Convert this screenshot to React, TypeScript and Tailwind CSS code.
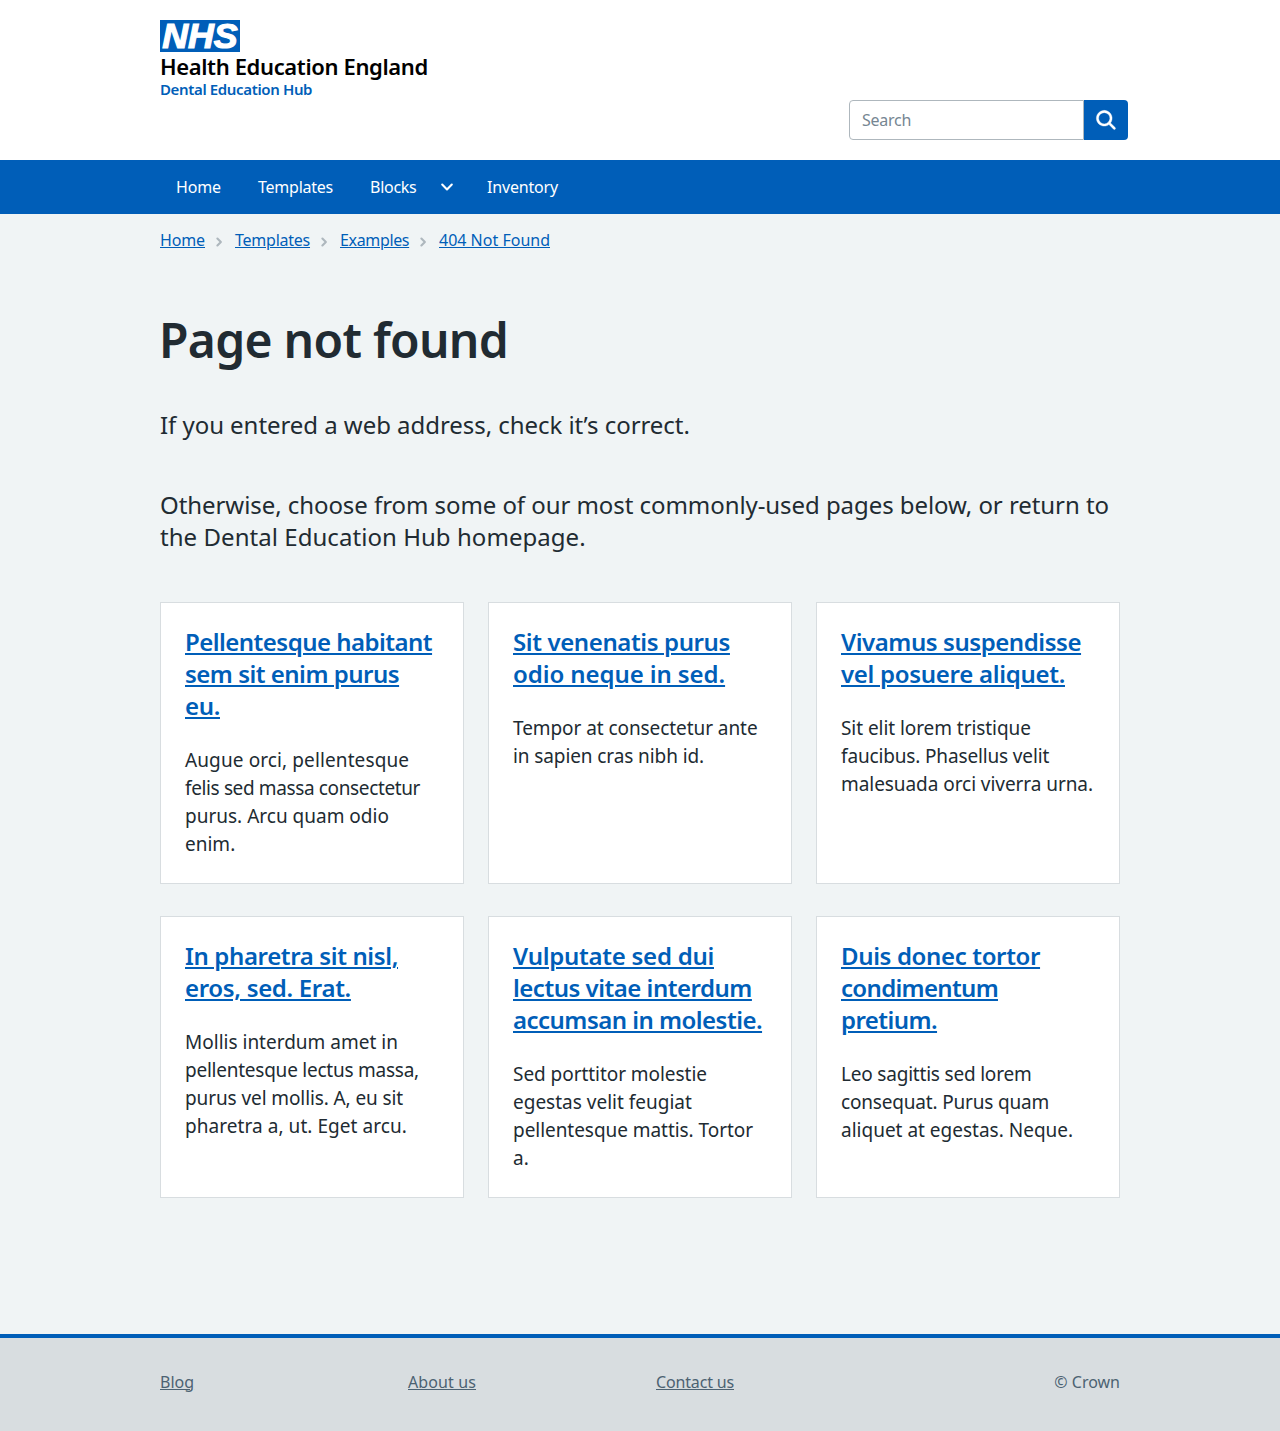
import { ChevronDown, ChevronRight } from "lucide-react";

type Line = [text: string, tracking: string];

interface CardData {
  title: Line[];
  body: Line[];
}

const cards: CardData[] = [
  {
    title: [
      ["Pellentesque habitant", "tracking-[-0.52px]"],
      ["sem sit enim purus", "tracking-[-0.5px]"],
      ["eu.", "tracking-[-0.33px]"],
    ],
    body: [
      ["Augue orci, pellentesque", "tracking-[0.11px]"],
      ["felis sed massa consectetur", "tracking-[-0.37px]"],
      ["purus. Arcu quam odio", "tracking-normal"],
      ["enim.", "tracking-normal"],
    ],
  },
  {
    title: [
      ["Sit venenatis purus", "tracking-[-0.39px]"],
      ["odio neque in sed.", "tracking-[-0.08px]"],
    ],
    body: [
      ["Tempor at consectetur ante", "tracking-[-0.07px]"],
      ["in sapien cras nibh id.", "tracking-[-0.1px]"],
    ],
  },
  {
    title: [
      ["Vivamus suspendisse", "tracking-[-0.44px]"],
      ["vel posuere aliquet.", "tracking-[-0.29px]"],
    ],
    body: [
      ["Sit elit lorem tristique", "tracking-[-0.06px]"],
      ["faucibus. Phasellus velit", "tracking-[-0.15px]"],
      ["malesuada orci viverra urna.", "tracking-[-0.06px]"],
    ],
  },
  {
    title: [
      ["In pharetra sit nisl,", "tracking-[-0.37px]"],
      ["eros, sed. Erat.", "tracking-[-0.32px]"],
    ],
    body: [
      ["Mollis interdum amet in", "tracking-normal"],
      ["pellentesque lectus massa,", "tracking-[-0.24px]"],
      ["purus vel mollis. A, eu sit", "tracking-[-0.1px]"],
      ["pharetra a, ut. Eget arcu.", "tracking-[0.06px]"],
    ],
  },
  {
    title: [
      ["Vulputate sed dui", "tracking-[-0.26px]"],
      ["lectus vitae interdum", "tracking-[-0.49px]"],
      ["accumsan in molestie.", "tracking-[-0.52px]"],
    ],
    body: [
      ["Sed porttitor molestie", "tracking-[-0.05px]"],
      ["egestas velit feugiat", "tracking-normal"],
      ["pellentesque mattis. Tortor", "tracking-[-0.05px]"],
      ["a.", "tracking-normal"],
    ],
  },
  {
    title: [
      ["Duis donec tortor", "tracking-[-0.36px]"],
      ["condimentum", "tracking-[-0.68px]"],
      ["pretium.", "tracking-[-0.56px]"],
    ],
    body: [
      ["Leo sagittis sed lorem", "tracking-[-0.2px]"],
      ["consequat. Purus quam", "tracking-[-0.18px]"],
      ["aliquet at egestas. Neque.", "tracking-normal"],
    ],
  },
];

const crumbs: [label: string, style: string][] = [
  ["Home", "w-[45px] tracking-[-0.13px]"],
  ["Templates", "w-[75px] tracking-[-0.24px]"],
  ["Examples", "w-[69px] tracking-[-0.35px]"],
  ["404 Not Found", "w-[111px]"],
];

function Lines({ lines }: { lines: Line[] }) {
  return (
    <>
      {lines.map(([text, tracking]) => (
        <span key={text} className={`block whitespace-nowrap ${tracking}`}>
          {text}
        </span>
      ))}
    </>
  );
}

function Logo() {
  return (
    <svg viewBox="0 0 80 32" className="block h-8 w-20" role="img" aria-label="NHS">
      <rect width="80" height="32" fill="#005eb8" />
      <text
        x="2.2"
        y="28.3"
        textLength="75.5"
        lengthAdjust="spacingAndGlyphs"
        fill="#fff"
        stroke="#fff"
        strokeWidth="1.2"
        fontFamily="Liberation Sans, sans-serif"
        fontStyle="italic"
        fontWeight="700"
        fontSize="35"
      >
        NHS
      </text>
    </svg>
  );
}

function Header() {
  return (
    <header className="h-40 bg-white">
      <div className="mx-auto flex h-full w-[960px] justify-between pt-5">
        <a href="#" className="block">
          <Logo />
          <span className="block text-[22px] leading-7 font-semibold tracking-[-0.37px] whitespace-nowrap text-black">
            Health Education England
          </span>
          <span className="block text-[15px] leading-[18px] font-semibold tracking-[-0.36px] whitespace-nowrap text-[#005eb8]">
            Dental Education Hub
          </span>
        </a>
        <form className="-mr-2 mt-20 flex h-10">
          <input
            type="text"
            placeholder="Search"
            className="w-[235px] rounded-l border border-[#aeb7bd] bg-white px-3 text-base tracking-[-0.27px] placeholder:text-[#768692]"
          />
          <button type="button" aria-label="Search" className="flex w-11 items-center justify-center rounded-r bg-[#005eb8]">
            <svg viewBox="0 0 24 24" className="size-[27px]" fill="#fff" stroke="#fff" strokeWidth="0.3" aria-hidden="true">
              <path d="M19.71 18.29l-4.11-4.1a7 7 0 1 0-1.41 1.41l4.1 4.11a1 1 0 0 0 1.42 0 1 1 0 0 0 0-1.42zM5 10a5 5 0 1 1 5 5 5 5 0 0 1-5-5z" />
            </svg>
          </button>
        </form>
      </div>
    </header>
  );
}

function Nav() {
  return (
    <nav className="h-[54px] bg-[#005eb8] text-base text-white">
      <div className="mx-auto flex h-full w-[960px] items-center pl-4">
        <a href="#" className="w-[82px] tracking-[-0.13px]">Home</a>
        <a href="#" className="w-[112px] tracking-[-0.24px]">Templates</a>
        <a href="#" className="flex w-[117px] items-center tracking-[-0.27px]">
          <span className="w-[69px]">Blocks</span>
          <ChevronDown className="size-4" viewBox="2 2 20 20" strokeWidth={2.6} />
        </a>
        <a href="#" className="tracking-[-0.18px]">Inventory</a>
      </div>
    </nav>
  );
}

function Breadcrumb() {
  return (
    <ol className="flex h-[52px] items-center text-base text-[#005eb8]">
      {crumbs.map(([label, style], i) => (
        <li key={label} className="flex items-center">
          {i > 0 && (
            <span className="flex w-[30px] justify-center pt-1">
              <ChevronRight className="size-3.5 text-[#aeb7bd]" viewBox="1.5 0 24 24" strokeWidth={3.6} />
            </span>
          )}
          <a href="#" className={`block whitespace-nowrap underline decoration-1 underline-offset-1 ${style}`}>
            {label}
          </a>
        </li>
      ))}
    </ol>
  );
}

function Card({ title, body }: CardData) {
  return (
    <article className="flex h-[282px] flex-col gap-6 border border-[#d8dde0] bg-white px-6 pt-[23px]">
      <h2 className="text-2xl leading-8 font-semibold">
        <a href="#" className="text-[#005eb8] underline decoration-2 underline-offset-2">
          <Lines lines={title} />
        </a>
      </h2>
      <p className="text-[19px] leading-7">
        <Lines lines={body} />
      </p>
    </article>
  );
}

function Footer() {
  return (
    <footer className="h-[97px] border-t-4 border-[#005eb8] bg-[#d8dde0] text-base text-[#4c6272]">
      <div className="mx-auto flex w-[960px] pt-8">
        <div className="w-[248px]">
          <a href="#" className="underline decoration-1 underline-offset-1">Blog</a>
        </div>
        <div className="w-[248px]">
          <a href="#" className="tracking-[0.11px] underline decoration-1 underline-offset-1">About us</a>
        </div>
        <div className="flex-1">
          <a href="#" className="tracking-[-0.16px] underline decoration-1 underline-offset-1">Contact us</a>
        </div>
        <p>© Crown</p>
      </div>
    </footer>
  );
}

export default function App() {
  return (
    <div className="flex min-h-[1431px] flex-col bg-[#f0f4f5] font-['Noto_Sans',sans-serif] text-[#212b32]">
      <Header />
      <Nav />
      <main className="mx-auto w-[960px] flex-1">
        <Breadcrumb />
        <h1 className="-ml-px mt-[46px] text-5xl leading-[56px] font-semibold tracking-[-0.72px]">Page not found</h1>
        <p className="mt-[41px] text-2xl leading-8 tracking-[-0.05px]">If you entered a web address, check it’s correct.</p>
        <p className="mt-12 text-2xl leading-8">
          <span className="block tracking-[-0.065px] whitespace-nowrap">
            Otherwise, choose from some of our most commonly-used pages below, or return to
          </span>
          <span className="block tracking-[0.05px]">the Dental Education Hub homepage.</span>
        </p>
        <section className="mt-[49px] grid grid-cols-3 gap-x-6 gap-y-8">
          {cards.map((card) => (
            <Card key={card.title[0][0]} {...card} />
          ))}
        </section>
      </main>
      <Footer />
    </div>
  );
}
